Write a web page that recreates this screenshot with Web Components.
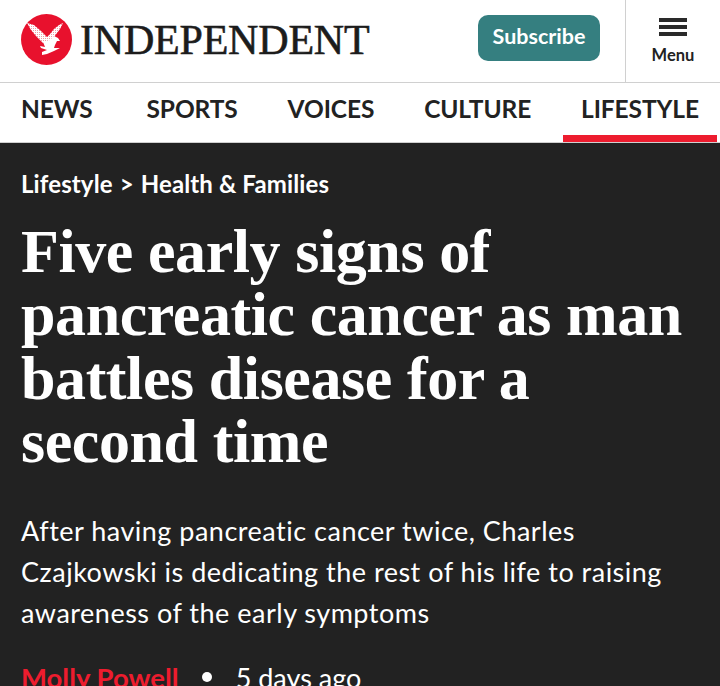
<!DOCTYPE html>
<html lang="en">
<head>
<meta charset="utf-8">
<title>Independent</title>
<style>
  html, body { margin: 0; padding: 0; background: #222; height: 100%; overflow: hidden; }
</style>
</head>
<body>
<indy-header></indy-header>
<indy-nav>
  <a>NEWS</a><a>SPORTS</a><a>VOICES</a><a>CULTURE</a><a class="active">LIFESTYLE</a>
</indy-nav>
<indy-hero>
  <span slot="crumb1">Lifestyle</span>
  <span slot="crumb2">Health &amp; Families</span>
  <span slot="title">Five early signs of pancreatic cancer as man battles disease for a second time</span>
  <span slot="sub">After having pancreatic cancer twice, Charles Czajkowski is dedicating the rest of his life to raising awareness of the early symptoms</span>
  <span slot="author">Molly Powell</span>
  <span slot="time">5 days ago</span>
</indy-hero>

<script>
class IndyHeader extends HTMLElement {
  constructor() {
    super();
    this.attachShadow({ mode: 'open' });
    this.shadowRoot.innerHTML = `
      <style>
        :host { display: flex; height: 82px; background: #fff; border-bottom: 1px solid #d0d0d0; align-items: stretch; }
        .logo { display: flex; align-items: center; padding-left: 21px; gap: 8px; flex: 1; padding-bottom: 3px; }
        .logo svg { display: block; width: 51px; height: 51px; }
        .word { font: 400 42px "Liberation Serif", serif; color: #1c1c1c; letter-spacing: -0.2px; white-space: nowrap; -webkit-text-stroke: .6px #1c1c1c; }
        .sub { align-self: center; margin: 0 25px 6px 0; width: 122px; height: 46px; border-radius: 10px; background: #357f80;
          color: #fff; font: 700 21.5px Lato, sans-serif; display: flex; align-items: center; justify-content: center; padding-bottom: 4px; box-sizing: border-box; }
        .menu { width: 95px; border-left: 1px solid #d0d0d0; display: flex; flex-direction: column; align-items: center; padding-top: 18px; box-sizing: border-box; color: #222; }
        .menu i { display: block; width: 28px; height: 3.5px; background: #2a2a2a; margin-bottom: 3.5px; }
        .menu span { font: 700 16.5px Lato, sans-serif; margin-top: 6px; }
      </style>
      <div class="logo">
        <svg viewBox="0 0 51 51">
          <defs>
            <pattern id="speck" width="2" height="2" patternUnits="userSpaceOnUse">
              <rect width="2" height="2" fill="#fff"/>
              <rect width="1" height="1" fill="#f39aa5"/>
            </pattern>
          </defs>
          <circle cx="25.5" cy="25.5" r="25.5" fill="#e8112d"/>
          <path fill="url(#speck)" d="M6 9 L13 11 L20 17 L26 23 L29 20 L33 15 L38 11 L42 9 L39 15 L36 19 L33 23 L29 28 L22 29 L15 22 L10 16 Z"/>
          <path fill="#fff" d="M22 28 L29 26 L33 22 L37 24 L39 27 L36 27 L34 31 L33 34 L39 34 L33 37 L26 40 L21 41 L21 38 L26 36 L20 34 L19 32 L24 33 Z"/>
        </svg>
        <div class="word">INDEPENDENT</div>
      </div>
      <div class="sub">Subscribe</div>
      <div class="menu"><i></i><i></i><i></i><span>Menu</span></div>
    `;
  }
}
customElements.define('indy-header', IndyHeader);

class IndyNav extends HTMLElement {
  constructor() {
    super();
    this.attachShadow({ mode: 'open' });
    this.shadowRoot.innerHTML = `
      <style>
        :host { display: block; height: 60px; background: #fff; border-bottom: 1px solid #d0d0d0; box-sizing: border-box; }
        .row { display: flex; height: 59px; padding: 0 3px; justify-content: space-between; font: 700 24.5px Lato, sans-serif; color: #222; letter-spacing: -.1px; }
        ::slotted(a) { display: block; padding: 11px 18px 0; height: 41px; border-bottom: 7px solid transparent; }
        ::slotted(a:nth-child(2)) { margin-left: 4px; }
        ::slotted(a.active) { border-bottom-color: #ed1c2e; }
      </style>
      <div class="row"><slot></slot></div>
    `;
  }
}
customElements.define('indy-nav', IndyNav);

class IndyHero extends HTMLElement {
  constructor() {
    super();
    this.attachShadow({ mode: 'open' });
    this.shadowRoot.innerHTML = `
      <style>
        :host { display: block; background: #222; color: #fff; padding: 23px 21px 0; height: 543px; box-sizing: border-box; overflow: hidden; }
        .crumbs { display: flex; gap: 7px; font: 700 24px/36px Lato, sans-serif; letter-spacing: .12px; }
        h1 { margin: 18px 0 0; font: 700 62px/63.3px "Liberation Serif", serif; letter-spacing: -.42px; }
        p { margin: 37px 0 0; max-width: 650px; font: 400 27px/41px Lato, sans-serif; letter-spacing: .5px; font-variant-ligatures: none; }
        .meta { margin-top: 27px; display: flex; align-items: center; font: 400 27px/36px Lato, sans-serif; }
        .author { font-weight: 700; font-size: 27.5px; color: #ed1c2e; }
        .dot { width: 10px; height: 10px; border-radius: 50%; background: #fff; margin: -2px 24px 0 23px; }
      </style>
      <div class="crumbs"><slot name="crumb1"></slot><span>&gt;</span><slot name="crumb2"></slot></div>
      <h1><slot name="title"></slot></h1>
      <p><slot name="sub"></slot></p>
      <div class="meta"><span class="author"><slot name="author"></slot></span><span class="dot"></span><slot name="time"></slot></div>
    `;
  }
}
customElements.define('indy-hero', IndyHero);
</script>
</body>
</html>
